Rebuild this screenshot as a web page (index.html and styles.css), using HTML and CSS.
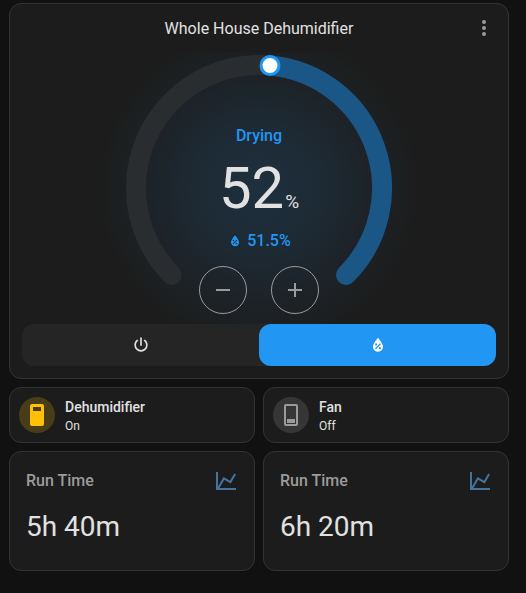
FILE: index.html
```html
<!DOCTYPE html>
<html lang="en">
<head>
<meta charset="utf-8">
<meta name="viewport" content="width=device-width, initial-scale=1">
<title>Whole House Dehumidifier</title>
<link rel="stylesheet" href="styles.css">
</head>
<body>
<svg class="defs" aria-hidden="true">
  <symbol id="drop" viewBox="0 0 24 24"><path fill-rule="evenodd" d="M12,3.25C12,3.25 6,10 6,14C6,17.32 8.69,20 12,20A6,6 0 0,0 18,14C18,10 12,3.25 12,3.25M14.47,9.97L15.53,11.03L9.53,17.03L8.47,15.97M9.75,10A1.25,1.25 0 0,1 11,11.25A1.25,1.25 0 0,1 9.75,12.5A1.25,1.25 0 0,1 8.5,11.25A1.25,1.25 0 0,1 9.75,10M14.25,14.5A1.25,1.25 0 0,1 15.5,15.75A1.25,1.25 0 0,1 14.25,17A1.25,1.25 0 0,1 13,15.75A1.25,1.25 0 0,1 14.25,14.5Z"/></symbol>
  <symbol id="chart" viewBox="0 0 24 24"><path d="M16,11.78L20.24,4.45L21.97,5.45L16.74,14.5L10.23,10.75L5.46,19H22V21H2V3H4V17.54L9.5,8L16,11.78Z"/></symbol>
</svg>
<main class="dashboard">
  <section class="card humidifier">
    <header class="header">
      <h1 class="title">Whole House Dehumidifier</h1>
      <button class="menu" type="button" aria-label="More">
        <svg class="icon" viewBox="0 0 24 24"><circle cx="12" cy="6" r="2"/><circle cx="12" cy="12" r="2"/><circle cx="12" cy="18" r="2"/></svg>
      </button>
    </header>
    <div class="dial">
      <svg class="ring" viewBox="0 0 272 272" aria-hidden="true">
        <path class="track" d="M49 223A123 123 0 1 1 223 223"/>
        <path class="range" d="M147 13.5A123 123 0 0 1 223 223"/>
        <circle class="thumb" cx="147" cy="13.5" r="9"/>
      </svg>
      <div class="info">
        <p class="action">Drying</p>
        <p class="target">52<span class="unit">%</span></p>
        <p class="current"><svg class="icon-small"><use href="#drop"/></svg>51.5%</p>
        <div class="steps">
          <button class="step" type="button" aria-label="Decrease"><svg class="icon" viewBox="0 0 24 24"><path d="M19,13H5V11H19V13Z"/></svg></button>
          <button class="step" type="button" aria-label="Increase"><svg class="icon" viewBox="0 0 24 24"><path d="M19,13H13V19H11V13H5V11H11V5H13V11H19V13Z"/></svg></button>
        </div>
      </div>
    </div>
    <div class="modes">
      <button class="mode" type="button" aria-label="Off"><svg class="icon-mode" viewBox="0 0 24 24"><path d="M16.56,5.44L15.11,6.89C16.84,7.94 18,9.83 18,12A6,6 0 0,1 12,18A6,6 0 0,1 6,12C6,9.83 7.16,7.94 8.88,6.88L7.44,5.44C5.36,6.88 4,9.28 4,12A8,8 0 0,0 12,20A8,8 0 0,0 20,12C20,9.28 18.64,6.88 16.56,5.44M13,3H11V13H13"/></svg></button>
      <button class="mode selected" type="button" aria-label="On" aria-pressed="true"><svg class="icon-mode"><use href="#drop"/></svg></button>
    </div>
  </section>
  <div class="grid">
    <section class="card tile">
      <span class="badge on"><svg class="icon" viewBox="0 0 24 24"><path fill-rule="evenodd" d="M7 1H17A2 2 0 0 1 19 3V21A2 2 0 0 1 17 23H7A2 2 0 0 1 5 21V3A2 2 0 0 1 7 1ZM8 4V8H16V4Z"/></svg></span>
      <div><h2 class="name">Dehumidifier</h2><p class="state">On</p></div>
    </section>
    <section class="card tile">
      <span class="badge"><svg class="icon" viewBox="0 0 24 24"><path fill-rule="evenodd" d="M7 1H17A2 2 0 0 1 19 3V21A2 2 0 0 1 17 23H7A2 2 0 0 1 5 21V3A2 2 0 0 1 7 1ZM7 3V21H17V3ZM8 16H16V20H8Z"/></svg></span>
      <div><h2 class="name">Fan</h2><p class="state">Off</p></div>
    </section>
    <section class="card stat">
      <div class="stat-head"><h2 class="stat-name">Run Time</h2><svg class="icon chart"><use href="#chart"/></svg></div>
      <p class="value">5h 40m</p>
    </section>
    <section class="card stat">
      <div class="stat-head"><h2 class="stat-name">Run Time</h2><svg class="icon chart"><use href="#chart"/></svg></div>
      <p class="value">6h 20m</p>
    </section>
  </div>
</main>
</body>
</html>
```
FILE: styles.css
```css
* { box-sizing: border-box; }
body {
  margin: 0;
  background: #111111;
  color: #e1e1e1;
  font-family: Roboto, sans-serif;
}
h1, h2, p { margin: 0; }
button {
  padding: 0;
  border: 0;
  background: none;
  color: inherit;
  font: inherit;
  cursor: pointer;
}
svg { display: block; fill: currentColor; }
.defs { display: none; }
.icon { width: 24px; height: 24px; }
.icon-mode { width: 20px; height: 20px; }
.icon-small { width: 16px; height: 16px; }

.dashboard {
  display: flex;
  flex-direction: column;
  gap: 8px;
  padding: 3px 17px 16px 9px;
}
.card {
  border: 1px solid #333333;
  border-radius: 12px;
  background: #1c1c1c;
}

.humidifier { padding: 12px; }
.header {
  display: grid;
  grid-template-columns: 24px 1fr 24px;
  margin-bottom: 10px;
}
.title {
  grid-column: 2;
  font-size: 16px;
  font-weight: 400;
  line-height: 26px;
  text-align: center;
}
.menu { height: 24px; color: #9b9b9b; }

.dial {
  display: grid;
  justify-content: center;
  background: radial-gradient(circle 160px at center, #1e303e 0%, #1d2a34 40%, #1d2227 72%, #1c1f20 90%, #1c1c1c 100%);
}
.ring, .info { grid-area: 1 / 1; }
.ring { width: 272px; height: 272px; fill: none; }
.track { stroke: #292d2f; stroke-width: 20px; stroke-linecap: round; }
.range { stroke: #1a5686; stroke-width: 20px; stroke-linecap: round; }
.thumb { fill: #ffffff; stroke: #2196f3; stroke-width: 3px; }
.info {
  display: flex;
  flex-direction: column;
  align-items: center;
  justify-content: flex-end;
  gap: 8px;
  padding-bottom: 10px;
}
.action, .current {
  color: #2196f3;
  font-size: 16px;
  font-weight: 500;
  line-height: 24px;
}
.target {
  display: flex;
  align-items: baseline;
  gap: 1px;
  font-size: 58px;
  line-height: 64px;
}
.unit { font-size: 19px; line-height: 24px; }
.current { display: flex; align-items: center; gap: 4px; line-height: 26px; }
.steps { display: flex; gap: 24px; padding-top: 4px; }
.step {
  display: grid;
  place-items: center;
  width: 48px;
  height: 48px;
  border: 1px solid #9b9b9b;
  border-radius: 50%;
  color: #9b9b9b;
}

.modes {
  display: grid;
  grid-template-columns: 1fr 1fr;
  border-radius: 12px;
  background: #252525;
}
.mode {
  display: grid;
  place-items: center;
  height: 42px;
  border-radius: 12px;
}
.selected { background: #2196f3; color: #ffffff; }

.grid {
  display: grid;
  grid-template-columns: 1fr 1fr;
  gap: 8px;
}
.tile {
  display: flex;
  align-items: center;
  gap: 10px;
  padding: 9px;
}
.badge {
  display: grid;
  place-items: center;
  width: 36px;
  height: 36px;
  border-radius: 50%;
  background: #363636;
  color: #9b9b9b;
}
.on { background: #493c18; color: #ffc107; }
.name { font-size: 14px; font-weight: 500; line-height: 20px; }
.state { font-size: 12px; line-height: 18px; }
.tile > div { height: 36px; }

.stat { padding: 16px 16px 24px; }
.stat-head {
  display: flex;
  align-items: center;
  justify-content: space-between;
  margin-bottom: 14px;
}
.stat-name {
  color: #9b9b9b;
  font-size: 16px;
  font-weight: 500;
  line-height: 26px;
}
.chart { color: #44739e; }
.value { font-size: 28px; line-height: 38px; }
```
